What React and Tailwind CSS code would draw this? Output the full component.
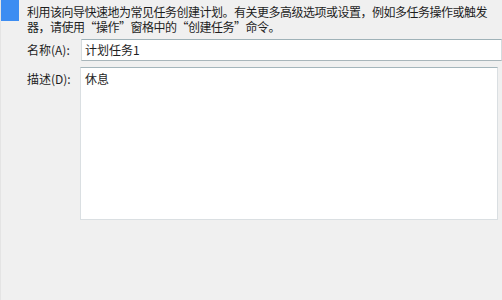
export default function App() {
  return (
    <div
      lang="zh-CN"
      className="w-[502px] h-[300px] overflow-hidden bg-[#f0f0f0] flex text-[#1e1e1e] font-['Microsoft_YaHei','Noto_Sans_CJK_SC',sans-serif] text-[12px] border-l border-[#e4e4e4]"
    >
      {/* blue marker */}
      <div className="w-[18px] h-[21px] bg-[#3d8df2] shrink-0" />

      <div className="flex-1 pl-[8px] pt-[4px] min-w-0">
        <p className="leading-[15px] tracking-[-0.5px] whitespace-nowrap">
          利用该向导快速地为常见任务创建计划。有关更多高级选项或设置，例如多任务操作或触发
          <br />
          器，请使用“操作”窗格中的“创建任务”命令。
        </p>

        <div className="flex mt-[5px]">
          <label className="w-[54px] shrink-0 leading-[22px]">名称(A):</label>
          <div className="w-[430px] h-[22px] bg-white border border-[#d5dbde] border-t-[#9fb2b8] border-b-[#a9b6bb] pl-[3px] leading-[20px]">
            计划任务1
          </div>
        </div>

        <div className="flex mt-[6px]">
          <label className="w-[53px] shrink-0 leading-[24px]">描述(D):</label>
          <div className="w-[418px] h-[153px] bg-white border border-[#dadfe2] border-t-[#a5b6bc] pl-[4px] leading-[22px]">
            休息
          </div>
        </div>
      </div>
    </div>
  );
}
